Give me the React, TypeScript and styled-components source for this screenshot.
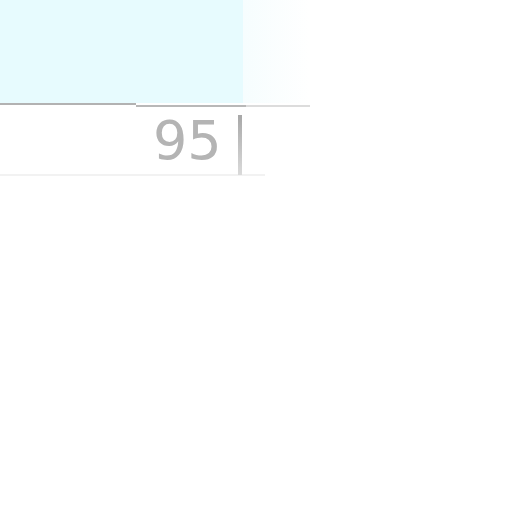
import * as React from 'react';
import styled, { createGlobalStyle } from 'styled-components';

const Global = createGlobalStyle`
  html, body { margin: 0; background: #ffffff; }
  body { font-family: "DejaVu Sans", sans-serif; }
`;

const Sheet = styled.div`
  display: flex;
  flex-direction: column;
  width: 512px;
  height: 512px;
  background: #ffffff;
`;

const HeaderRow = styled.div`
  display: flex;
  height: 103px;
`;

const Cell = styled.div<{ $w: number; $fade?: boolean }>`
  width: ${p => p.$w}px;
  background: ${p => (p.$fade ? 'linear-gradient(90deg, #f6fdfe, #ffffff)' : '#e7fbfe')};
`;

const Rule = styled.div`
  display: flex;
  align-items: flex-start;
  height: 4px;
`;

const RuleSeg = styled.div<{ $w: number; $top: number; $c: string }>`
  width: ${p => p.$w}px;
  height: 2px;
  margin-top: ${p => p.$top}px;
  background: ${p => p.$c};
`;

const EntryRow = styled.div`
  display: flex;
  align-items: flex-start;
  width: 265px;
  height: 69px;
  border-bottom: 2px solid #f2f2f2;
  box-sizing: border-box;
`;

const Value = styled.span`
  margin: 7px 0 0 153px;
  font-family: "DejaVu Sans", sans-serif;
  font-size: 54px;
  line-height: 1;
  color: #b4b4b4;
`;

const Caret = styled.span`
  width: 4px;
  height: 60px;
  margin: 8px 0 0 16px;
  background: linear-gradient(180deg, #a8a8a8, #dadada);
`;

export default function App() {
  return (
    <>
      <Global />
      <Sheet>
        <HeaderRow>
          <Cell $w={243} />
          <Cell $w={67} $fade />
        </HeaderRow>
        <Rule>
          <RuleSeg $w={136} $top={0} $c="#b2b2b2" />
          <RuleSeg $w={110} $top={2} $c="#b8b8b8" />
          <RuleSeg $w={64} $top={2} $c="#dcdcdc" />
        </Rule>
        <EntryRow>
          <Value>95</Value>
          <Caret />
        </EntryRow>
      </Sheet>
    </>
  );
}
